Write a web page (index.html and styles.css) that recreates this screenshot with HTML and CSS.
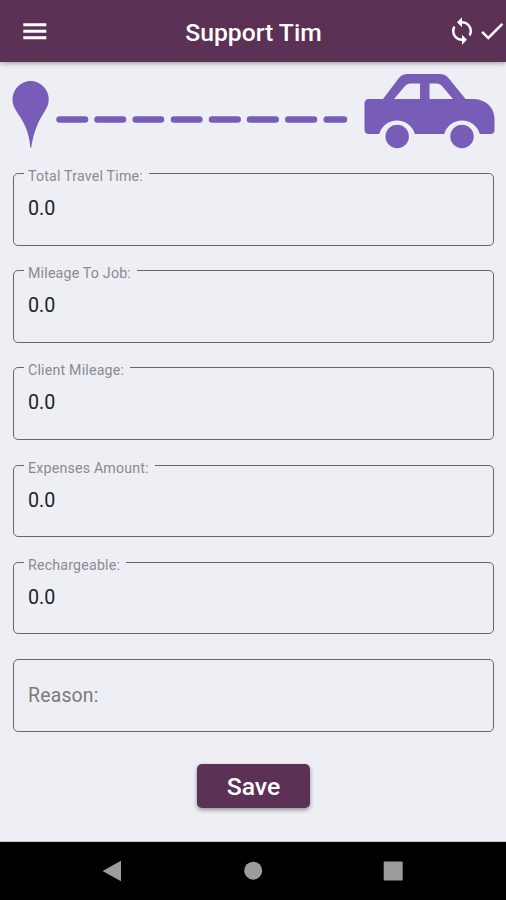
FILE: index.html
```html
<!DOCTYPE html>
<html lang="en">
<head>
<meta charset="utf-8">
<title>Support Tim</title>
<link rel="stylesheet" href="styles.css">
</head>
<body>
<div class="app">
  <header class="appbar">
    <svg class="menu" viewBox="0 0 24 17"><path d="M.3 .3h23v3h-23zM.3 6.800h23v3h-23zM.3 13.300h23v3h-23z"/></svg>
    <h1 class="title">Support Tim</h1>
    <div class="actions">
      <svg class="action" viewBox="0 0 24 24"><path d="M12 4V1L8 5l4 4V6c3.31 0 6 2.69 6 6 0 1.01-.25 1.97-.7 2.8l1.46 1.46C19.54 15.03 20 13.57 20 12c0-4.42-3.58-8-8-8zm0 14c-3.31 0-6-2.69-6-6 0-1.01.25-1.97.7-2.8L5.24 7.74C4.46 8.97 4 10.43 4 12c0 4.42 3.58 8 8 8v3l4-4-4-4v3z"/></svg>
      <svg class="action" viewBox="0 0 24 24"><path d="M9 16.17L4.83 12l-1.42 1.41L9 19 21 7l-1.41-1.41z"/></svg>
    </div>
  </header>
  <main class="content">
    <svg class="journey" viewBox="0 0 506 90">
      <path d="M12.500 37.200a18 18 0 0 1 36.200 0c0 6-2.500 9.500-5.500 14.500-5.500 9-9.500 18-12 34h-.8C29 69 24 60.500 18 51.700c-3-5-5.500-8.500-5.500-14.500z"/>
      <path class="dashes" d="M59.500 57.500H85M97.500 57.500H123M135.700 57.500H161M174 57.500H199.400M212 57.500H237.700M250 57.500H275.700M288.300 57.500H314M326.700 57.500H344"/>
      <path fill-rule="evenodd" d="M369 37h14l15.500-20.500Q402 12 407 12h33q5 0 8.500 4L465.500 37h7c13 0 22 8 22 20v11q0 4-4 4h-10.700a18.500 18.500 0 0 0-35.600 0h-29.400a18.500 18.500 0 0 0-35.600 0H369q-4.500 0-4.500-4.500v-26Q364.500 37 369 37zM394 37h26V21.500h-10q-3 0-5 2.500zM429.500 37h23.500l-11-13q-2-2.500-5-2.500h-7.500z"/>
      <circle cx="397.200" cy="74.500" r="11.700"/><circle cx="462" cy="74.500" r="11.700"/>
    </svg>
    <form class="form">
      <fieldset class="field"><legend>Total Travel Time:</legend><div class="value">0.0</div></fieldset>
      <fieldset class="field"><legend>Mileage To Job:</legend><div class="value">0.0</div></fieldset>
      <fieldset class="field"><legend>Client Mileage:</legend><div class="value">0.0</div></fieldset>
      <fieldset class="field"><legend>Expenses Amount:</legend><div class="value">0.0</div></fieldset>
      <fieldset class="field"><legend>Rechargeable:</legend><div class="value">0.0</div></fieldset>
      <fieldset class="field"><div class="placeholder">Reason:</div></fieldset>
      <button class="save" type="button">Save</button>
    </form>
  </main>
  <nav class="navbar">
    <svg viewBox="0 0 20 22"><path d="M19 .8v20.400L.5 11z"/></svg>
    <svg viewBox="0 0 20 22"><circle cx="10.200" cy="10.700" r="9"/></svg>
    <svg viewBox="0 0 20 22"><rect x=".7" y="1.500" width="19" height="19" rx="1"/></svg>
  </nav>
</div>
</body>
</html>
```
FILE: styles.css
```css
* { box-sizing: border-box; }
body { margin: 0; font-family: Roboto, "Liberation Sans", sans-serif; background: #eeeff5; }
.app { height: 900px; display: flex; flex-direction: column; overflow: hidden; }
.appbar {
  height: 62px; flex: none; display: grid; grid-template-columns: 1fr auto 1fr; align-items: center;
  background: #5b3156; color: #fff; box-shadow: 0 1px 5px rgba(0, 0, 0, .38);
}
.menu { width: 24px; height: 17px; margin-left: 23px; fill: #fff; }
.title { margin: 4px 0 0 1px; font-size: 24.7px; font-weight: 500; line-height: 30px; }
.actions { display: flex; justify-content: flex-end; margin-right: -1px; }
.action { width: 30px; height: 30px; fill: #fff; }
.content { flex: 1; min-height: 0; }
.journey { display: block; width: 506px; height: 90px; fill: #775db8; }
.dashes { fill: none; stroke: #775db8; stroke-width: 6.500; stroke-linecap: round; }
.form { display: flex; flex-direction: column; gap: 24.6px; padding: 21px 12px 0 13px; }
.field {
  height: 72.6px; margin: 0; padding: 0 0 0 10px; min-width: 0;
  border: 1px solid #66666b; border-radius: 5px;
}
.field legend {
  position: relative; top: 3px; height: 1px; line-height: 1px; padding: 0 6px 0 4px;
  font-size: 14.2px; letter-spacing: .2px; color: #8a8a90;
}
.value { padding: 20px 0 0 4px; font-size: 19.7px; line-height: 30px; color: #222225; }
.placeholder { padding: 21px 0 0 4px; font-size: 19.4px; line-height: 30px; letter-spacing: .2px; color: #7b7b80; }
.save {
  align-self: center; width: 113px; height: 44px; margin-top: 8px; padding: 0;
  border: 0; border-radius: 5px; background: #5b3156; color: #fff;
  font: 500 24.8px Roboto, "Liberation Sans", sans-serif; box-shadow: 0 2px 4px rgba(0, 0, 0, .4);
}
.navbar {
  flex: none; height: 58px; background: #000; display: flex; justify-content: space-between;
  align-items: center; padding: 0 103px 0 102px; box-shadow: 0 -1px 0 #c5c8cb;
}
.navbar svg { width: 20px; height: 22px; fill: #9c9c9c; }
```
